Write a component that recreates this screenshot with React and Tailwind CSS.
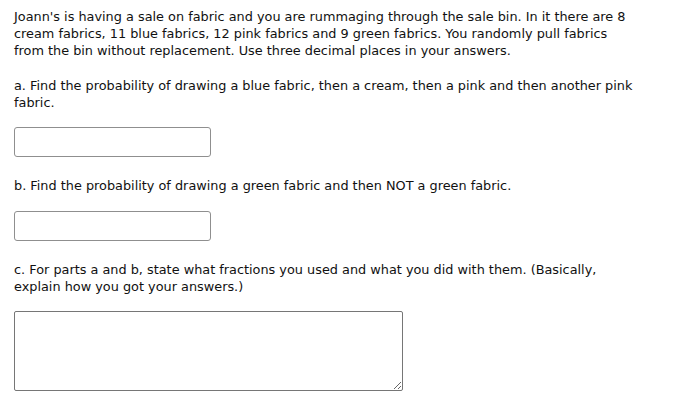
export default function App() {
  return (
    <div
      className="min-h-[406px] bg-white pt-[8px] pl-[14px] text-[12.85px] leading-[17px] text-[#111]"
      style={{ fontFamily: "'DejaVu Sans', Verdana, sans-serif" }}
    >
      <div className="w-[623px]">
        <p>
          Joann's is having a sale on fabric and you are rummaging through the sale bin. In it there are 8 cream fabrics, 11 blue fabrics, 12 pink fabrics and 9 green fabrics. You randomly pull fabrics from the bin without replacement. Use three decimal places in your answers.
        </p>
        <p className="mt-[18px]">
          a. Find the probability of drawing a blue fabric, then a cream, then a pink and then another pink fabric.
        </p>
        <input
          type="text"
          className="mt-[16px] block h-[30px] w-[197px] rounded-[3px] border border-[#8f8f8f] bg-white px-2 outline-none"
        />
        <p className="mt-[20px]">
          b. Find the probability of drawing a green fabric and then NOT a green fabric.
        </p>
        <input
          type="text"
          className="mt-[17px] block h-[30px] w-[197px] rounded-[3px] border border-[#8f8f8f] bg-white px-2 outline-none"
        />
        <p className="mt-[20px]">
          c. For parts a and b, state what fractions you used and what you did with them. (Basically, explain how you got your answers.)
        </p>
        <textarea
          className="mt-[16px] block h-[80px] w-[389px] rounded-[2px] border border-[#767676] bg-white p-1 outline-none"
        />
      </div>
    </div>
  );
}
